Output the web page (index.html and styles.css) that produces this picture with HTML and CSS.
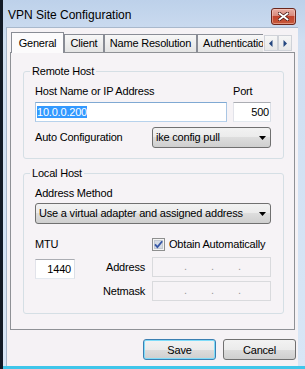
FILE: index.html
```html
<!DOCTYPE html>
<html lang="en">
<head>
    <meta charset="UTF-8">
    <meta name="viewport" content="width=device-width, initial-scale=1.0">
    <title>VPN Site Configuration</title>
    <link rel="stylesheet" href="styles.css">
</head>
<body>
    <div class="window">
        <div class="titlebar">
            <span class="title">VPN Site Configuration</span>
            <button class="close-btn" type="button">
                <svg width="11" height="9" viewBox="0 0 11 9">
                    <path d="M1.5 1.5 L9.5 7.5 M9.5 1.5 L1.5 7.5" stroke="#4a1a14" stroke-width="3.4" stroke-linecap="square" fill="none"/>
                    <path d="M1.5 1.5 L9.5 7.5 M9.5 1.5 L1.5 7.5" stroke="#fff" stroke-width="1.8" stroke-linecap="square" fill="none"/>
                </svg>
            </button>
        </div>

        <div class="client">
            <div class="tabs">
                <div class="tab active" style="width: 53px">General</div>
                <div class="tab" style="width: 40px">Client</div>
                <div class="tab" style="width: 93px">Name Resolution</div>
                <div class="tab clipped" style="width: 66px">Authentication</div>
                <div class="tab-scroll">
                    <span class="scroll-btn">
                        <svg width="4" height="7" viewBox="0 0 4 7"><path d="M3.5 0 L0 3.5 L3.5 7Z" fill="#24467f"/></svg>
                    </span>
                    <span class="scroll-btn">
                        <svg width="4" height="7" viewBox="0 0 4 7"><path d="M0.5 0 L4 3.5 L0.5 7Z" fill="#24467f"/></svg>
                    </span>
                </div>
            </div>

            <div class="tab-panel">
                <fieldset class="group">
                    <legend>Remote Host</legend>
                    <div class="host-grid">
                        <label>Host Name or IP Address</label>
                        <label>Port</label>
                        <div class="textbox focused"><span class="selected">10.0.0.200</span></div>
                        <div class="textbox number">500</div>
                    </div>
                    <div class="field-row">
                        <label>Auto Configuration</label>
                        <div class="combo" style="width: 119px">
                            <span>ike config pull</span>
                            <svg width="7" height="4" viewBox="0 0 7 4"><path d="M0 0H7L3.5 4Z" fill="#000"/></svg>
                        </div>
                    </div>
                </fieldset>

                <fieldset class="group local">
                    <legend>Local Host</legend>
                    <label class="method-label">Address Method</label>
                    <div class="combo">
                        <span>Use a virtual adapter and assigned address</span>
                        <svg width="7" height="4" viewBox="0 0 7 4"><path d="M0 0H7L3.5 4Z" fill="#000"/></svg>
                    </div>
                    <div class="local-grid">
                        <label class="mtu-label">MTU</label>
                        <div class="check-row">
                            <svg width="13" height="13" viewBox="0 0 13 13">
                                <rect x="0.5" y="0.5" width="12" height="12" fill="#f4f4f4" stroke="#8e8f8f"/>
                                <rect x="2.5" y="2.5" width="8" height="8" fill="#d5dbe5" stroke="#c3c8d0"/>
                                <path d="M3 6.3 L5.4 9 L10.2 3.2" fill="none" stroke="#3757a6" stroke-width="1.8"/>
                            </svg>
                            <span>Obtain Automatically</span>
                        </div>
                        <div class="textbox number mtu">1440</div>
                        <label class="side-label">Address</label>
                        <div class="ip-box">
                            <span class="seg"></span><span class="dot">.</span>
                            <span class="seg"></span><span class="dot">.</span>
                            <span class="seg"></span><span class="dot">.</span>
                            <span class="seg"></span>
                        </div>
                        <label class="side-label netmask">Netmask</label>
                        <div class="ip-box">
                            <span class="seg"></span><span class="dot">.</span>
                            <span class="seg"></span><span class="dot">.</span>
                            <span class="seg"></span><span class="dot">.</span>
                            <span class="seg"></span>
                        </div>
                    </div>
                </fieldset>
            </div>

            <div class="buttons">
                <button type="button" class="btn default">Save</button>
                <button type="button" class="btn">Cancel</button>
            </div>
        </div>
    </div>
</body>
</html>
```

FILE: styles.css
```css
* {
    box-sizing: border-box;
}
html, body {
    margin: 0;
    padding: 0;
}
body {
    width: 305px;
    height: 369px;
    overflow: hidden;
    background-color: #121a26;
    font-family: "Liberation Sans", Arial, sans-serif;
    font-size: 11px;
    line-height: 13px;
    letter-spacing: -0.2px;
    color: #000;
}
.window {
    margin-left: 3px;
    width: 302px;
    height: 369px;
    padding: 0 7px 0 3px;
    background: linear-gradient(#bdd1ea, #cfdef1 40px, #d8e6f6);
    border-bottom: 3px solid #3fc6ea;
    display: flex;
    flex-direction: column;
}
.titlebar {
    height: 27px;
    flex-shrink: 0;
    display: flex;
    justify-content: space-between;
    align-items: flex-start;
    padding: 8px 2px 0 2px;
}
.title {
    font-size: 12px;
    line-height: 14px;
    letter-spacing: 0;
}
.close-btn {
    width: 25px;
    height: 17px;
    padding: 0;
    border: 1px solid #6b261c;
    border-radius: 3px;
    background: linear-gradient(#e8aea4, #d88a7c 45%, #c2432c 50%, #c75a3c);
    display: flex;
    align-items: center;
    justify-content: center;
    box-shadow: inset 0 0 0 1px rgba(255, 220, 210, 0.45);
}
.client {
    flex: 1;
    background-color: #f5f2f5;
    border-left: 1px solid #a8b8cc;
    border-top: 1px solid #a8b8cc;
    display: flex;
    flex-direction: column;
}

/* tabs */
.tabs {
    height: 24px;
    flex-shrink: 0;
    display: flex;
    align-items: flex-end;
    padding: 4px 0 0 4px;
}
.tab {
    height: 18px;
    border: 1px solid #898c95;
    border-bottom: none;
    background: linear-gradient(#f7f7f7, #e4e4e4);
    text-align: center;
    line-height: 16px;
    white-space: nowrap;
}
.tab.active {
    height: 21px;
    margin-bottom: -1px;
    position: relative;
    z-index: 1;
    background: #fcfbfc;
    line-height: 21px;
}
.tab.clipped {
    overflow: hidden;
    border-right: none;
    text-align: left;
    padding-left: 5px;
}
.tab-scroll {
    display: flex;
    margin: 0 0 1px 1px;
}
.scroll-btn {
    width: 14px;
    height: 16px;
    border: 1px solid #cfd2d8;
    background: linear-gradient(#f6f6f6, #e8e8e8);
    display: flex;
    align-items: center;
    justify-content: center;
}
.tab-panel {
    margin-left: 3px;
    width: 285px;
    border: 1px solid #8f9196;
    background-color: #f6f3f6;
    padding: 12px 0 15px 12px;
}

/* group boxes */
.group {
    margin: 0;
    width: 261px;
    min-width: 0;
    border: 1px solid #d5dfe5;
    border-radius: 3px;
    padding: 7px 12px 10px 11px;
}
.group legend {
    padding: 0 2px;
    margin-left: -5px;
    line-height: 13px;
}
.group.local {
    margin-top: 8px;
    padding-bottom: 12px;
}
label {
    display: block;
}
.host-grid {
    display: grid;
    grid-template-columns: 192px 38px;
    column-gap: 6px;
    row-gap: 4px;
}
.textbox {
    height: 20px;
    border: 1px solid;
    border-color: #abadb3 #dbdfe6 #e3e9ef #e2e3ea;
    background-color: #fff;
    padding: 2px 1px;
    line-height: 14px;
    white-space: nowrap;
}
.textbox.focused {
    border-color: #7fa9d3 #a9c6e4 #b7d2ec #a9c6e4;
}
.textbox.number {
    text-align: right;
}
.selected {
    background-color: #3399ff;
    color: #fff;
}
.field-row {
    margin-top: 5px;
    display: flex;
    justify-content: space-between;
    align-items: center;
}
.combo {
    height: 21px;
    border: 1px solid #707070;
    border-radius: 3px;
    background: linear-gradient(#f2f2f2, #ebebeb 50%, #dddddd 50%, #cfcfcf);
    padding: 0 4px 0 3px;
    display: flex;
    align-items: center;
    justify-content: space-between;
    white-space: nowrap;
}
.method-label {
    margin-bottom: 3px;
}
.local-grid {
    margin-top: 14px;
    display: grid;
    grid-template-columns: 40px 77px 119px;
    grid-template-rows: 15px 20px 20px;
    row-gap: 4px;
}
.mtu-label {
    grid-column: 1 / 3;
}
.check-row {
    display: flex;
    align-items: flex-start;
    gap: 4px;
}
.textbox.mtu {
    margin: 2px 0 -2px;
    padding-right: 3px;
}
.side-label {
    grid-column: 2;
    justify-self: end;
    align-self: center;
    padding-right: 7px;
}
.side-label.netmask {
    grid-row: 3;
}
.ip-box {
    grid-column: 3;
    height: 20px;
    border: 1px solid #d9dadd;
    padding: 2px 0 0 6px;
    display: flex;
    color: #9a9a9a;
}
.seg {
    width: 25px;
}
.dot {
    width: 2px;
    overflow: visible;
}

/* dialog buttons */
.buttons {
    margin-top: 9px;
    padding-right: 2px;
    display: flex;
    justify-content: flex-end;
    gap: 7px;
}
.btn {
    width: 73px;
    height: 21px;
    padding: 0;
    font-family: inherit;
    font-size: 11px;
    letter-spacing: -0.2px;
    color: #000;
    border: 1px solid #707070;
    border-radius: 3px;
    background: linear-gradient(#f2f2f2, #ebebeb 50%, #dddddd 50%, #cfcfcf);
}
.btn.default {
    border-color: #3c7fb1;
    box-shadow: inset 0 0 0 1px #7fdcf9;
}
```
